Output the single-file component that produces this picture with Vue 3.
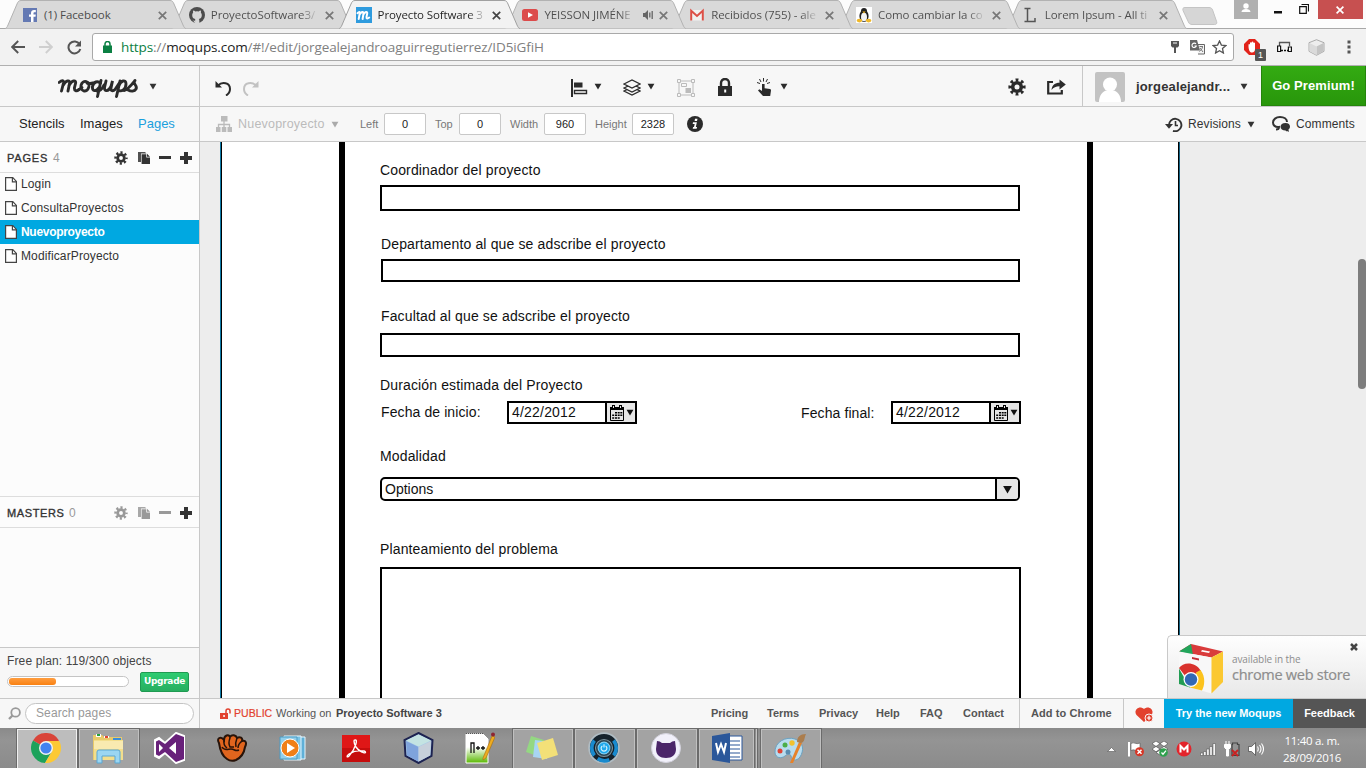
<script setup>
const tabs = [
  { id: 'fb', title: '(1) Facebook' },
  { id: 'gh', title: 'ProyectoSoftware3/' },
  { id: 'mq', title: 'Proyecto Software 3', active: true },
  { id: 'yt', title: 'YEISSON JIMÉNE', audio: true },
  { id: 'gm', title: 'Recibidos (755) - ale' },
  { id: 'tux', title: 'Como cambiar la co' },
  { id: 'li', title: 'Lorem Ipsum - All ti' },
]
const pages = ['Login', 'ConsultaProyectos', 'Nuevoproyecto', 'ModificarProyecto']
const dims = [
  { label: 'Left', value: 0, cls: 'd-left' },
  { label: 'Top', value: 0, cls: 'd-top' },
  { label: 'Width', value: 960, cls: 'd-width' },
  { label: 'Height', value: 2328, cls: 'd-height' },
]
const used = 119
const quota = 300
</script>

<template>
  <div class="screen">
    <svg class="defs" width="0" height="0">
      <symbol id="gear" viewBox="0 0 18 18">
        <circle cx="9" cy="9" r="4.3" fill="none" stroke="currentColor" stroke-width="3.6" />
        <circle cx="9" cy="9" r="7" fill="none" stroke="currentColor" stroke-width="3.2" pathLength="16" stroke-dasharray="1 1" stroke-dashoffset=".5" />
      </symbol>
      <symbol id="copy" viewBox="0 0 12 12">
        <path d="M0 0h7l1.500 1.500H3V10H0z" fill="currentColor" opacity=".85" />
        <path d="M3.600 2.200h4.700v3.400H12V12H3.600z" fill="currentColor" />
        <path d="M9 1.800 12 4.800H9z" fill="currentColor" />
      </symbol>
      <symbol id="caret" viewBox="0 0 8 7"><path d="M.6.8h6.800L4 6.600z" fill="currentColor" /></symbol>
      <symbol id="doc" viewBox="0 0 12 14">
        <path d="M.6.600h7.200l3.600 3.800v9H.6z" fill="#fff" stroke="#444" stroke-width="1.200" />
        <path d="M7.400.8v4h4" fill="none" stroke="#444" stroke-width="1.200" />
      </symbol>
      <symbol id="cal" viewBox="0 0 14 16">
        <path d="M.5 2.500h13v13H.5z" fill="#e6e6e6" stroke="#000" />
        <path d="M0 2h14v3H0zM2 0h3v3H2zM9 0h3v3H9z" /><path d="M3 1h1v2H3zM10 1h1v2h-1z" fill="#e6e6e6" />
        <path d="M5 7h2v1.500H5zM7.700 7h2v1.500h-2zM10.300 7h2v1.500h-2zM2.200 9.500h2V11h-2zM5 9.500h2V11H5zM7.700 9.500h2V11h-2zM10.300 9.500h2V11h-2zM2.200 12.200h2v1.500h-2zM5 12.200h2v1.500H5zM7.700 12.200h2v1.500h-2z" />
      </symbol>
      <symbol id="ball" viewBox="0 0 30 30">
        <path d="M15 15 2 7.500A15 15 0 0 1 28 7.500z" fill="#d9453a" />
        <path d="M15 15 2 7.500A15 15 0 0 0 14 30l7-12z" fill="#1da25b" />
        <path d="M15 8h13.200A15 15 0 0 1 14 30l7.200-12z" fill="#fcc934" />
        <circle cx="15" cy="15" r="7" fill="#f3f3f3" /><circle cx="15" cy="15" r="5.600" fill="#4383f0" />
      </symbol>
    </svg>

    <header class="tabstrip">
      <div v-for="t in tabs" :key="t.id" class="tab" :class="[{ active: t.active }, 't-' + t.id]">
        <svg class="shape" width="181" height="29" viewBox="0 0 181 29">
          <path d="M0 28.500 C1 28.500 2 27.500 3 25 L12 4 C13 1.500 14 .5 16 .5 H165 C167 .5 168 1.500 169 4 L178 25 C179 27.500 180 28.500 181 28.500" />
        </svg>
        <svg class="fav" width="16" height="16" viewBox="0 0 16 16">
          <template v-if="t.id === 'fb'">
            <path d="M1 1h14v14H1z" fill="#6479b3" /><path d="M9 15V9.800H7V7.400h2V6c0-2 1.200-3 3-3h1.800v2.300h-1.200c-.9 0-1.100.4-1.100 1.100v1h2.300l-.3 2.400h-2V15z" fill="#fff" />
          </template>
          <template v-else-if="t.id === 'gh'">
            <circle cx="8" cy="8" r="8" fill="#4d4d4d" /><path d="M6 16v-2.300c-2 .4-2.500-.8-3-1.700M6.200 12C4 11.600 3.200 10.200 3.200 8c0-1 .3-1.700.9-2.300-.2-.7-.1-1.500.1-2.200.9 0 1.600.5 2.100.9a7 7 0 0 1 3.400 0c.5-.4 1.200-.9 2.100-.9.2.7.3 1.500.1 2.200.6.6.9 1.300.9 2.300 0 2.200-.8 3.600-3 4 .3.300.5.800.5 1.500V16H6z" fill="#d9d9d9" />
          </template>
          <template v-else-if="t.id === 'mq'">
            <path d="M0 0h16v16H0z" fill="#2e9bde" /><path d="M1.500 6.200C3 4.500 4 4.500 3.800 6L2.700 12M3.600 7.600C5 4.800 7.800 4 7.500 6.500L6.600 12M7.400 7.600c1.400-2.800 4.200-3.600 3.800-1L10.500 10c-.3 1.600 1 2 2.700.6" fill="none" stroke="#fff" stroke-width="2" stroke-linecap="round" />
          </template>
          <template v-else-if="t.id === 'yt'">
            <rect y="2" width="16" height="12" rx="2.500" fill="#dc4b4b" /><path d="M6 5.200v5.600L11 8z" fill="#fff" />
          </template>
          <template v-else-if="t.id === 'gm'">
            <path d="M1.500 3h13v10.500h-13z" fill="#f1f1f1" /><path d="M2.200 13.500V3.800L8 9l5.800-5.200v9.700" fill="none" stroke="#dc5047" stroke-width="2" />
          </template>
          <template v-else-if="t.id === 'tux'">
            <path d="M0 0h16v16H0z" fill="#fff" /><ellipse cx="8" cy="9" rx="4.600" ry="6" fill="#222" /><circle cx="8" cy="4" r="3" fill="#222" /><ellipse cx="8" cy="10" rx="3" ry="4.300" fill="#f4f4f4" /><path d="M6.300 4.600h3.400L8 6.400z" fill="#eeb320" /><ellipse cx="3.400" cy="13.600" rx="2.800" ry="1.800" fill="#f0b828" /><ellipse cx="12.600" cy="13.600" rx="2.800" ry="1.800" fill="#f0b828" />
          </template>
          <path v-else d="M1.500 1.500h6M1.500 14.500h10.500v-3.500M4.500 1.500v13" fill="none" stroke="#555" stroke-width="1.500" />
        </svg>
        <span class="ttl">{{ t.title }}</span>
        <svg v-if="t.audio" class="audio" width="11" height="10" viewBox="0 0 11 10"><path d="M0 3h2l3-3v10L2 7H0z" fill="#666" /><path d="M6.800 2.500v5M9.200 1v8" stroke="#666" stroke-width="1.300" /></svg>
        <svg class="x" width="9" height="9" viewBox="0 0 9 9"><path d="M.8.800l7.400 7.400M8.200.8.8 8.200" stroke="currentColor" stroke-width="1.700" /></svg>
      </div>
      <svg class="newtab" width="36" height="18" viewBox="0 0 36 18"><path d="M3 .5h24c2 0 3 1 3.600 2.500l4 11.500c.6 2-.2 3-2 3H10c-2 0-3-1-3.600-2.500L1 3.500C.5 1.500 1 .5 3 .5z" fill="#d6d6d6" stroke="#c4c4c4" /></svg>
      <div class="wincontrols">
        <span class="user"><svg width="24" height="19" viewBox="0 0 24 19"><circle cx="12" cy="6" r="2.700" fill="#fff" /><path d="M7.500 12c0-2 2-3 4.500-3s4.500 1 4.500 3z" fill="#fff" /></svg></span>
        <svg class="min" width="8" height="3" viewBox="0 0 8 3"><path d="M0 0h8v2.500H0z" fill="#111" /></svg>
        <svg class="max" width="10" height="10" viewBox="0 0 10 10"><path d="M.7 2.700h6.600v6.600H.7zM2.500.5h7v7" fill="none" stroke="#111" stroke-width="1.200" /></svg>
        <span class="close"><svg width="8" height="8" viewBox="0 0 8 8"><path d="M.6.600l6.800 6.800M7.400.6.6 7.400" stroke="#fff" stroke-width="1.700" /></svg></span>
      </div>
    </header>

    <div class="navbar">
      <svg class="nav back" width="14" height="14" viewBox="0 0 14 14"><path d="M14 7H1.500M7.200 1 1.200 7l6 6" fill="none" stroke="#555" stroke-width="1.900" /></svg>
      <svg class="nav fwd" width="14" height="14" viewBox="0 0 14 14"><path d="M0 7h12.500M6.800 1l6 6-6 6" fill="none" stroke="#cfcfcf" stroke-width="1.900" /></svg>
      <svg class="nav reload" width="15" height="15" viewBox="0 0 15 15"><path d="M12.600 4.200A6 6 0 1 0 13.300 9" fill="none" stroke="#555" stroke-width="2" /><path d="M14 .5V6.500H8z" fill="#555" /></svg>
      <div class="omnibox">
        <svg class="padlock" width="9" height="12" viewBox="0 0 9 12"><path d="M0 4.500h9V12H0z" fill="#0b8043" /><path d="M2 5V3a2.500 2.500 0 0 1 5 0v2" fill="none" stroke="#0b8043" stroke-width="1.500" /></svg>
        <span class="url"><span class="https">https</span>://<b>moqups.com</b>/#!/edit/jorgealejandroaguirregutierrez/ID5iGfiH</span>
        <svg class="keyi" width="8" height="12" viewBox="0 0 8 12"><path d="M0 0h8v5L6.500 6.500H5V12H3V6.500H1.500L0 5z" fill="#555" /><path d="M2 2h4" stroke="#fff" /></svg>
        <svg class="trans" width="15" height="15" viewBox="0 0 15 15"><path d="M6 4.500h8.500v9.500H8" fill="#f5f5f5" stroke="#666" /><path d="M0 0h7l3 10.500H0z" fill="#666" /><path d="M6 4a2.200 2.200 0 1 0 .3 2H4.500" fill="none" stroke="#fff" stroke-width="1.100" /><path d="M9.500 6.500H13M12.500 7c-.5 2.500-2 3.500-3 4.500M10 8l3 4" fill="none" stroke="#777" /></svg>
        <svg class="star" width="15" height="14" viewBox="0 0 15 14"><path d="m7.500 1 1.900 4.100 4.400.5-3.300 3 .9 4.400-3.900-2.200L3.600 13l.9-4.400-3.300-3 4.400-.5z" fill="none" stroke="#555" stroke-width="1.300" /></svg>
      </div>
      <div class="ext adb">
        <svg width="16" height="16" viewBox="0 0 16 16"><path d="M5 0h6l5 5v6l-5 5H5l-5-5V5z" fill="#e2231a" /><path d="M4.500 8V5.500a.9.900 0 0 1 1.500 0V3.800a.9.900 0 0 1 1.700 0V3a.9.900 0 0 1 1.700 0v1a.9.900 0 0 1 1.600 0v6c0 2-1 3.500-3 3.500S5 12 4.500 8z" fill="#fff" /></svg>
        <span class="badge">1</span>
      </div>
      <svg class="ext cast" width="15" height="13" viewBox="0 0 15 13"><path d="M2.500 5V1.500h10V5" fill="none" stroke="#555" stroke-width="1.300" /><path d="M.6 5h3v5.500h-3zM11.400 6h3v4.500h-3z" fill="#fff" stroke="#111" stroke-width="1.200" /><path d="M4 9.500h7" stroke="#111" stroke-width="1.400" stroke-dasharray="2 1" /></svg>
      <svg class="ext cube" width="17" height="17" viewBox="0 0 17 17"><path d="m8.500.7 7.500 3v8.600l-7.500 4-7.500-4V3.700z" fill="#ededed" stroke="#999" stroke-width=".8" /><path d="m8.500 7.500 7-3.500v8.200l-7 3.800z" fill="#c4c4c4" /><path d="M1.500 4 8.500 7.500V16l-7-3.800z" fill="#dadada" /></svg>
      <svg class="ext dots" width="4" height="14" viewBox="0 0 4 14"><path d="M.5.500h3v3h-3zM.5 5.500h3v3h-3zM.5 10.500h3v3h-3z" fill="#555" /></svg>
    </div>

    <div class="brand">
      <svg class="logo" width="81" height="20" viewBox="0 0 81 20">
        <path d="M1 4.500C4 2 6 2 5.500 5L3.500 13M5 7.500C8 2 12.500 1.500 11.500 5.500L10 13M11 7.500C14 2 18.500 1.500 17.500 5.500L16.500 9.500C16 13 18.500 13.500 21 11.500" />
        <ellipse cx="27" cy="8.200" rx="4" ry="4.800" transform="rotate(15 27 8)" /><path d="M21 11.500q2-1 3-2M29 5q3 1 6 0" />
        <path d="M42.500 5.500C40 2.500 35.500 3.500 34.500 8.500 34 13.500 38 14 41 9.500M43 2.500 39.500 18.500M39 13q4 .5 7-6" />
        <path d="M48 3 46.500 9.500C46 14 50.500 13.500 53 8.500L54.500 3 53 10c-.5 3 2 3.500 4 1.500l4-6" />
        <path d="M62 3 58.500 18.500M61 7.500c1.500-5 7-6.500 7-1.500 0 5-4.500 8.500-8 6" />
        <path d="M66 12.500c4-1 7-5 11-10M76.500 3c-2 3 3.500 4.500 1.500 8-1.500 2.500-5 2.500-8 1" />
      </svg>
      <svg class="car" width="8" height="7"><use href="#caret" /></svg>
    </div>

    <div class="actions">
      <svg class="undo" width="17" height="16" viewBox="0 0 17 16"><path d="M3 5.500C7 1.500 15 2.500 15 9c0 3-1.500 5-4 6.500" fill="none" stroke="currentColor" stroke-width="2" /><path d="M.5 1v6.500H7z" fill="currentColor" /></svg>
      <svg class="redo" width="17" height="16" viewBox="0 0 17 16"><path d="M14 5.500C10 1.500 2 2.500 2 9c0 3 1.500 5 4 6.500" fill="none" stroke="currentColor" stroke-width="2" /><path d="M16.500 1v6.500H10z" fill="currentColor" /></svg>
      <svg class="align" width="17" height="18" viewBox="0 0 17 18"><path d="M0 0h2v18H0zM3 3.500h8.500v5H3z" fill="currentColor" /><path d="M3.500 11.500h12v3h-12z" fill="#fff" stroke="currentColor" stroke-width="1.400" /></svg>
      <svg class="car c1" width="8" height="7"><use href="#caret" /></svg>
      <svg class="layers" width="18" height="17" viewBox="0 0 18 17"><g fill="#f7f7f7" stroke="currentColor" stroke-width="1.200"><path d="m1 12 8-3.800L17 12l-8 4z" /><path d="m1 9 8-3.800L17 9l-8 4z" /><path d="m1 5 8-4 8 4-8 4z" /></g></svg>
      <svg class="car c2" width="8" height="7"><use href="#caret" /></svg>
      <svg class="group" width="18" height="18" viewBox="0 0 18 18"><path d="M2 2h14v14H2z" fill="none" stroke="#bbb" /><g fill="#f7f7f7" stroke="#bbb"><path d="M.5.500h3v3h-3zM14.500.500h3v3h-3zM.5 14.500h3v3h-3zM14.500 14.500h3v3h-3zM4.500 4.500h5v3h-5z" /></g><path d="M8.500 9h5.500v5H8.500z" fill="#bbb" /></svg>
      <svg class="lock" width="14" height="18" viewBox="0 0 14 18"><path d="M0 8h14v10H0z" fill="currentColor" /><path d="M3 9V5a4 4 0 0 1 8 0v4" fill="none" stroke="currentColor" stroke-width="2.400" /><path d="M6.200 11.500h2v3h-2z" fill="#fff" /></svg>
      <svg class="hand" width="15" height="18" viewBox="0 0 15 18"><path d="M5 6h2.600v4.200l5.400.8c.8.200 1 .8 1 1.500L13.200 18H6l-5-5.500 1.300-1.200L5 13z" fill="currentColor" /><path d="M6.500 0v3.500M2.500 1 4 4M10.500 1 9 4M0 4.500l3 1M13 4.500l-3 1" stroke="currentColor" /></svg>
      <svg class="car c3" width="8" height="7"><use href="#caret" /></svg>
      <svg class="cog" width="18" height="18"><use href="#gear" /></svg>
      <svg class="share" width="19" height="16" viewBox="0 0 19 16"><path d="M6 3H1.200v11.500h13.600V11" fill="none" stroke="currentColor" stroke-width="2.200" /><path d="M4.500 11C5 6 8 3.700 12.500 3.700V.5L18.800 5.500l-6.300 5V7.300C9 7.300 6.500 8.500 4.500 11z" fill="currentColor" /></svg>
      <div class="account">
        <svg width="30" height="30" viewBox="0 0 30 30"><rect width="30" height="30" rx="2" fill="#c3c3c3" /><circle cx="15" cy="12.500" r="7" fill="#fff" /><path d="M4 30c0-7 4-10.500 7-11.500h8c3 1 7 4.500 7 11.500z" fill="#fff" /></svg>
        <b>jorgealejandr...</b>
        <svg class="car" width="8" height="7"><use href="#caret" /></svg>
      </div>
      <div class="premium">Go Premium!</div>
    </div>

    <nav class="libs"><span class="l1">Stencils</span><span class="l2">Images</span><span class="l3">Pages</span></nav>

    <div class="props">
      <svg class="tree" width="16" height="16" viewBox="0 0 16 16"><path d="M5 0h6.500v5.500H5zM0 11h4.500v5H0zM5.800 11h4.500v5H5.800zM11.500 11H16v5h-4.500z" fill="#bbb" /><path d="M8 5v6M2.500 11V8.500h11V11" fill="none" stroke="#bbb" stroke-width="1.300" /></svg>
      <span class="pname">Nuevoproyecto</span>
      <svg class="car" width="8" height="7"><use href="#caret" /></svg>
      <label v-for="d in dims" :key="d.label" :class="d.cls"><span>{{ d.label }}</span><i>{{ d.value }}</i></label>
      <svg class="info" width="16" height="16" viewBox="0 0 16 16"><circle cx="8" cy="8" r="8" fill="#2b2b2b" /><path d="M8 2.800h2.500L10 5H7.600zM6 6.300h3.900L8.800 11h1.300l-.5 1.700H5.700L6.100 11H7l.7-3H5.700z" fill="#fff" /></svg>
      <div class="rev">
        <svg width="18" height="15" viewBox="0 0 18 15"><path d="M4 8a6.200 6.200 0 1 1 4 5.800" fill="none" stroke="currentColor" stroke-width="1.900" /><path d="M0 7h8L4 11.800z" fill="currentColor" /><path d="M10.500 4v4.500H13" fill="none" stroke="currentColor" stroke-width="1.600" /></svg>
        <span>Revisions</span><svg class="car" width="8" height="7"><use href="#caret" /></svg>
      </div>
      <div class="com">
        <svg width="19" height="16" viewBox="0 0 19 16"><path d="M4 13.500c2.200 0 3-.8 3-2.500C3 11.500 1 9 1 6.500 1 3.500 4 1 8 1s7 2 7 5" fill="none" stroke="currentColor" stroke-width="2" /><path d="M13.500 7c-3 0-5 1.600-5 3.800s2 3.700 5 3.700c.7.800 2 1.200 3.500 1.200l-.6-2.200c1-.7 1.600-1.600 1.600-2.700C18 8.600 16.500 7 13.500 7z" fill="currentColor" /></svg>
        <span>Comments</span>
      </div>
    </div>

    <aside class="side">
      <div class="panel pages">
        <div class="phead">
          <b>PAGES</b><em>4</em>
          <svg class="pg" width="14" height="14"><use href="#gear" /></svg>
          <svg class="pc" width="12" height="12"><use href="#copy" /></svg>
          <svg class="pm" width="12" height="3" viewBox="0 0 12 3"><path d="M0 0h12v3H0z" fill="currentColor" /></svg>
          <svg class="pp" width="12" height="12" viewBox="0 0 12 12"><path d="M4 0h4v4h4v4H8v4H4V8H0V4h4z" fill="#333" /></svg>
        </div>
        <ul>
          <li v-for="p in pages" :key="p" :class="{ sel: p === 'Nuevoproyecto' }"><svg width="12" height="14"><use href="#doc" /></svg>{{ p }}</li>
        </ul>
      </div>
      <div class="panel masters">
        <div class="phead off">
          <b>MASTERS</b><em>0</em>
          <svg class="pg" width="14" height="14"><use href="#gear" /></svg>
          <svg class="pc" width="12" height="12"><use href="#copy" /></svg>
          <svg class="pm" width="12" height="3" viewBox="0 0 12 3"><path d="M0 0h12v3H0z" fill="currentColor" /></svg>
          <svg class="pp" width="12" height="12" viewBox="0 0 12 12"><path d="M4 0h4v4h4v4H8v4H4V8H0V4h4z" fill="#333" /></svg>
        </div>
      </div>
      <div class="plan">
        <p>Free plan: {{ used }}/{{ quota }} objects</p>
        <div class="prow"><div class="track"><div class="fill" :style="{ width: (used / quota * 100) + '%' }"></div></div><span class="upgrade">Upgrade</span></div>
      </div>
    </aside>

    <main class="work">
      <div class="sheet">
        <div class="frame">
          <p class="lb a">Coordinador del proyecto</p><div class="box b1"></div>
          <p class="lb b">Departamento al que se adscribe el proyecto</p><div class="box b2"></div>
          <p class="lb c">Facultad al que se adscribe el proyecto</p><div class="box b3"></div>
          <p class="lb d">Duración estimada del Proyecto</p>
          <div class="dates">
            <span class="s1">Fecha de inicio:</span>
            <div class="date"><span>4/22/2012</span><i><svg width="14" height="16"><use href="#cal" /></svg><svg class="car" width="8" height="7"><use href="#caret" /></svg></i></div>
            <span class="s2">Fecha final:</span>
            <div class="date"><span>4/22/2012</span><i><svg width="14" height="16"><use href="#cal" /></svg><svg class="car" width="8" height="7"><use href="#caret" /></svg></i></div>
          </div>
          <p class="lb e">Modalidad</p>
          <div class="select"><span>Options</span><i><svg width="11" height="9"><use href="#caret" /></svg></i></div>
          <p class="lb f">Planteamiento del problema</p><div class="area"></div>
        </div>
      </div>
      <div class="scroll"></div>
      <div class="store">
        <svg class="bag" width="46" height="52" viewBox="0 0 46 52">
          <path d="M1 8.500 13 1l32 7.500-11.500 6z" fill="#d93b3b" /><path d="M1 8.500 13 1l2 11z" fill="#22a55b" />
          <path d="m1 8.500 32.500 6V50.500L1 41z" fill="#f8f8f8" /><path d="m33.500 14.500 11.500-6V39L33.500 50.500z" fill="#fbc831" />
          <path d="m14 14 7 1.500v2L14 16z" fill="#c42d35" /><path d="m24 7 8 1.500-1 1.500-8-1.500z" fill="#fff" />
          <path d="M1 25C5 19 17 18 23 28l-4 3-7-1-4 4z" fill="#d9322d" /><path d="M1 25.500 7 36l6 7.500-1 1L1 41z" fill="#229c53" /><path d="M18 29.500 22.500 27C28 34 26.500 43 24 47.500L12 44.500l7-7z" fill="#fcc31e" />
          <circle cx="13" cy="36.500" r="7.500" fill="#fff" /><circle cx="13" cy="36.500" r="6.200" fill="#3268b4" />
        </svg>
        <div class="stext"><span>available in the</span><strong>chrome web store</strong></div>
        <svg class="sx" width="8" height="8" viewBox="0 0 8 8"><path d="M1 1l6 6M7 1 1 7" stroke="#444" stroke-width="2.500" /></svg>
      </div>
    </main>

    <div class="search">
      <svg width="13" height="13" viewBox="0 0 13 13"><circle cx="7.600" cy="5.400" r="4.300" fill="none" stroke="#999" stroke-width="1.800" /><path d="M4.500 8.500 1 12" stroke="#999" stroke-width="2.300" /></svg>
      <div class="sbox">Search pages</div>
    </div>

    <footer class="foot">
      <svg class="ulock" width="11" height="11" viewBox="0 0 11 11"><path d="M0 5h8v6H0z" fill="#e2412e" /><path d="M6 5V3a2 2 0 0 1 4 0v2.500" fill="none" stroke="#e2412e" stroke-width="1.500" /><path d="M3.300 7h1.500v2H3.300z" fill="#fff" /></svg>
      <span class="public">PUBLIC</span><span class="working">Working on</span><b class="proj">Proyecto Software 3</b>
      <b class="f1">Pricing</b><b class="f2">Terms</b><b class="f3">Privacy</b><b class="f4">Help</b><b class="f5">FAQ</b><b class="f6">Contact</b>
      <b class="add">Add to Chrome</b>
      <span class="heart"><svg width="19" height="16" viewBox="0 0 19 16"><path d="M9 15 1.500 8C-2 3.500 4-2.500 9 2c5-4.500 11 1.500 7.500 6z" fill="#e2412e" /><circle cx="14" cy="11" r="4" fill="#e2412e" stroke="#f7f7f7" /><path d="M14 8.800v4.400M11.800 11h4.400" stroke="#fff" stroke-width="1.200" /></svg></span>
      <b class="try">Try the new Moqups</b><b class="fdb">Feedback</b>
    </footer>

    <div class="taskbar">
      <div class="slot on hot"><svg width="30" height="30"><use href="#ball" /></svg></div>
      <div class="slot on"><svg width="32" height="32" viewBox="0 0 32 32"><path d="M1 3h9l2 2h18v23H1z" fill="#e9ca6a" /><path d="M4 2h5v3H4zM12 4h5v2h-5z" fill="#fff" /><path d="M5 2h3v2H5z" fill="#27a03c" /><path d="M13 4h3v2h-3z" fill="#e04934" /><path d="M21 6h8v2h-8z" fill="#3b8ed8" /><path d="M2 8h29v20H2z" fill="#f3de8c" /><path d="M2 9h29v8H2z" fill="#f9eab0" /><path d="M5 31V20q0-2 2-2h19q2 0 2 2v11h-5v-7H10v7z" fill="#9bd6f2" stroke="#5ba7d3" /></svg></div>
      <div class="slot"><svg width="32" height="32" viewBox="0 0 32 32"><path d="M22 1 30 4v24l-8 3L11 21l-6 5-4-2V8l4-2 6 5z" fill="#fff" stroke="#fff" stroke-width="2" /><path d="M22 2 30 5v22l-8 3L11 20l-6 4-3-1.500v-13L5 8l6 4z" fill="#68217a" /><path d="m22 10-7 6 7 6zM5 12v8l4-4z" fill="#fff" /></svg></div>
      <div class="slot"><svg width="30" height="28" viewBox="0 0 30 28"><path d="M2 9C-1 4 4 2 7 6 7 1 12 0 13 3c2-3 6-2 7 1 3-2 6 0 5 3 4-1 5 2 3 6-1 7-5 11-9 13q-5 2-9-1C5 22 3 16 2 9z" fill="#e0651e" stroke="#271309" stroke-width="2" /><path d="M7 6q-1 5 3 8M13 4q-2 5 0 9h4M20 4q-2 5-1 9M25 7q-4 3-4 7M5 13c2 4 6 2 9 2 4 0 4 3 8 1" fill="none" stroke="#271309" stroke-width="1.500" /></svg></div>
      <div class="slot"><svg width="30" height="26" viewBox="0 0 30 26"><path d="M10 2h16v22H10z" fill="#5fb0d8" stroke="#e7f6fd" /><path d="M5 1h17v24H5z" fill="#7bc4e6" stroke="#e7f6fd" /><path d="M1 2h17v22H1z" fill="#92cfeb" stroke="#4b9bc4" /><circle cx="11" cy="13" r="9" fill="#f07f18" stroke="#fff" /><path d="m8 8 8 5-8 5z" fill="#fff" /></svg></div>
      <div class="slot"><svg width="28" height="27" viewBox="0 0 28 27"><path d="M0 0h28v27H0z" fill="#c60d0d" /><path d="M0 0h28v13H0z" fill="#df1717" /><path d="M13 5c3-1 1 8-6 16-2 2-3 0 0-2 5-3 10-4 15-3 3 1 1 3-2 1-5-2-8-7-8-11 0-1 0-1 1-1z" fill="none" stroke="#fff" stroke-width="1.400" /></svg></div>
      <div class="slot"><svg width="31" height="32" viewBox="0 0 31 32"><path d="m15.500 1 14 7-1 16-13 7-13-7-1-16z" fill="#a8c8e8" stroke="#1d2351" stroke-width="2" /><path d="m15.500 2.500 12.500 6-12.500 6-12.500-6z" fill="#c4e3e2" /><path d="m3 9 12.500 6v14.500L4 23.500z" fill="#7fa3dc" /><path d="m28 9-12.500 6v14.500L27 23.500z" fill="#c7d0db" /></svg></div>
      <div class="slot"><svg width="30" height="32" viewBox="0 0 30 32"><defs><linearGradient id="npp" x2="0" y2="1"><stop offset=".45" stop-color="#fff" /><stop offset="1" stop-color="#58b800" /></linearGradient></defs><path d="M1 2h17l5 5v24H1z" fill="url(#npp)" stroke="#fff" /><path d="M1 1.500h18" stroke="#555" stroke-dasharray="1 1" /><path d="M6 21V11h3v10M11 16h4M13 14v4M16 16h4M18 14v4" fill="none" stroke="#111" stroke-width="1.300" /><path d="m18 26 9-22 3 1-9 21-3 2z" fill="#edac21" stroke="#a76c0c" stroke-width=".6" /><circle cx="28" cy="2.500" r="2" fill="#8e2431" /></svg></div>
      <div class="slot on"><svg width="32" height="26" viewBox="0 0 32 26"><path d="m5 1 13 4-4 17-14-5z" fill="#94d882" /><path d="m9 5 15 2-3 17-14-2z" fill="#a8d5f3" /><path d="m11 8 16-5 5 17-16 5z" fill="#f3e078" /></svg></div>
      <div class="slot on"><svg width="32" height="32" viewBox="0 0 30 30"><circle cx="15" cy="15" r="14" fill="#15222c" stroke="#b0bcc3" stroke-width="1.600" /><path d="M6 8a11 11 0 0 0 0 14M24 22a11 11 0 0 0 0-14M9 25a12 12 0 0 0 11 1" fill="none" stroke="#198ace" stroke-width="3.500" /><circle cx="15" cy="15" r="8" fill="#2c4552" stroke="#7c929c" /><circle cx="15" cy="15" r="5.500" fill="#1da7ed" stroke="#7fd0f5" /><path d="M13.500 13a2.700 2.700 0 1 0 3 0M15 11.500v3" fill="none" stroke="#d2f4ff" stroke-width="1.100" /></svg></div>
      <div class="slot on"><svg width="30" height="30" viewBox="0 0 30 30"><circle cx="15" cy="15" r="14.500" fill="#f1f0fa" stroke="#d2d1dc" /><path d="M6 8q3 0 5 2h8q2-2 5-2l1 8c0 6-4 9-10 9S5 22 5 16z" fill="#4a2569" /></svg></div>
      <div class="slot on stack"><svg width="32" height="30" viewBox="0 0 32 30"><path d="M15 3h15v24H15z" fill="#fff" stroke="#2b579a" /><path d="M18 8h10M18 12h10M18 16h10M18 20h10M18 24h10" stroke="#2b579a" stroke-width="1.200" /><path d="M0 3 18 0v30L0 27z" fill="#2b579a" /><path d="m4 10 2 9 3-8 3 8 2-9" fill="none" stroke="#fff" stroke-width="2" /></svg></div>
      <div class="slot on"><svg width="32" height="31" viewBox="0 0 32 31"><path d="M1 20C0 9 12 3 21 6c9 3 9 12 5 18-4 5-8 3-9-1-1-3-4-2-6 0-4 3-9 2-10-3z" fill="#b8dcee" stroke="#6ba2c2" /><circle cx="6" cy="18" r="2.500" fill="#df4436" /><circle cx="11" cy="12" r="2.500" fill="#4cae48" /><circle cx="18" cy="10" r="2.700" fill="#f2c12e" /><circle cx="14" cy="19" r="2.500" fill="#5a8caf" /><path d="m16 30 9-21 3 1-9 20z" fill="#e6822a" /><path d="M23 9c0-5 3-8 9-8-2 4-1 8-5 9z" fill="#ab7d4d" /></svg></div>
      <div class="tray">
        <svg class="up" width="9" height="5" viewBox="0 0 9 5"><path d="M4.500.5 8.500 4.500h-8z" fill="#fff" stroke="#555" stroke-width=".6" /></svg>
        <svg class="flag" width="17" height="16" viewBox="0 0 17 16"><path d="M1 1v14.500" stroke="#fff" stroke-width="2" /><path d="M3 2.500c3-2 5 1.500 9-.5v7C8 11 6 7.500 3 9.500z" fill="#fff" stroke="#555" stroke-width=".6" /><circle cx="11.500" cy="10.800" r="4.500" fill="#d63626" /><path d="m9.500 8.800 4 4M13.500 8.800l-4 4" stroke="#fff" stroke-width="1.500" /></svg>
        <svg class="drop" width="16" height="16" viewBox="0 0 16 16"><path d="m4 0 4 2.700L4 5.400 0 2.700zM12 0l4 2.700-4 2.700-4-2.700zM4 5.400l4 2.700-4 2.700L0 8.100zM12 5.400l4 2.700-4 2.700-4-2.700zM8 9l4 2.500L8 14l-4-2.500z" fill="#fff" stroke="#444" stroke-width=".6" /><circle cx="11.500" cy="11.500" r="4.300" fill="#2fa14d" /><path d="m9.500 11.500 1.500 1.700 3-3.500" fill="none" stroke="#fff" stroke-width="1.300" /></svg>
        <svg class="mega" width="16" height="16" viewBox="0 0 16 16"><circle cx="8" cy="8" r="7.500" fill="#e3242b" /><path d="M4.500 11.500V5L8 8.500 11.500 5v6.500" fill="none" stroke="#fff" stroke-width="2" /></svg>
        <svg class="net" width="16" height="13" viewBox="0 0 16 13"><path d="M.5 10h2.400v2.500H.5zM3.600 8.500H6v4H3.600zM6.700 6h2.400v6.500H6.700zM9.800 3.500h2.400v9H9.800zM13 .5h2.400v12H13z" fill="#fff" stroke="#555" stroke-width=".6" /></svg>
        <svg class="bat" width="16" height="16" viewBox="0 0 16 16"><path d="M2 0v3M5 0v3M.5 3.500h6v3l-2 2V15h-2V8.500l-2-2z" fill="#fff" stroke="#fff" /><path d="M8.500 3.500V2h5v1.500H15v11H8v-11z" fill="none" stroke="#444" stroke-width="1.200" /><path d="m8 9 6 6M14 9l-6 6" stroke="#c92121" stroke-width="1.800" /></svg>
        <svg class="vol" width="16" height="14" viewBox="0 0 16 14"><path d="M.5 4.500h3L7.500.700v12.600l-4-3.800h-3z" fill="#fff" stroke="#444" stroke-width=".7" /><path d="M9.500 4.500q1.500 2.500 0 5M11.500 3q3 4 0 8M13.500 1.500q4 5.500 0 11" fill="none" stroke="#fff" stroke-width="1.100" /></svg>
        <div class="clock"><span>11:40 a. m.</span><span>28/09/2016</span></div>
      </div>
    </div>
  </div>
</template>

<style>
html, body { margin: 0; overflow: hidden; }
</style>

<style scoped>
* { box-sizing: border-box; }
.screen {
  width: 1366px; height: 768px; display: grid; overflow: hidden;
  grid-template-columns: 200px 1166px;
  grid-template-rows: 29px 37px 41px 35px 556px 30px 40px;
  font-family: "Liberation Sans", Arial, sans-serif; font-size: 12px; color: #333; background: #f7f7f7;
}
.defs { position: absolute; }
svg { display: block; flex: none; }
p, ul { margin: 0; padding: 0; list-style: none; }
i, em { font-style: normal; }

.tabstrip { grid-column: 1 / 3; display: flex; padding-left: 5px; background: #fcfcfc; border-bottom: 1px solid #a8a8a8; font-family: "Open Sans", "Noto Sans", sans-serif; isolation: isolate; }
.tab { position: relative; width: 166.800px; height: 29px; display: flex; align-items: center; padding-left: 17px; flex: none; color: #4c4c4c; }
.tab:nth-child(1) { z-index: 6; } .tab:nth-child(2) { z-index: 5; } .tab:nth-child(4) { z-index: 4; }
.tab:nth-child(5) { z-index: 3; } .tab:nth-child(6) { z-index: 2; } .tab:nth-child(7) { z-index: 1; }
.shape { position: absolute; left: 0; top: 0; z-index: -1; }
.shape path { fill: #d9d9d9; stroke: #b2b2b2; }
.tab.active { z-index: 9; color: #222; }
.tab.active .shape path { fill: #f2f2f2; stroke: #a0a0a0; }
.fav { margin-top: 1px; }
.ttl { width: 107px; margin-left: 6px; font-size: 11.500px; white-space: nowrap; letter-spacing: -.08px; }
.t-gh .ttl, .t-mq .ttl, .t-yt .ttl, .t-gm .ttl, .t-tux .ttl, .t-li .ttl { background: linear-gradient(90deg, #4c4c4c 84%, #ccc 99%); background-clip: text; color: transparent; }
.t-mq .ttl { background-image: linear-gradient(90deg, #222 84%, #ccc 99%); background-clip: text; letter-spacing: -.12px; }
.t-yt .ttl { width: 90px; }
.audio { margin: 1px 0 0 9px; }
.x { margin-left: 7px; margin-top: 1px; color: #777; }
.t-yt .x { margin-left: 5px; }
.active .x { color: #444; }
.newtab { margin: 7px 0 0 9px; }
.wincontrols { display: flex; margin-left: 16.400px; height: 19px; }
.user { width: 24px; background: #b0b0b0; }
.min { margin: 11px 0 0 16px; }
.max { margin: 4px 0 0 17px; }
.close { width: 45px; margin-left: 9px; background: #c75050; display: flex; align-items: center; justify-content: center; }

.navbar { grid-column: 1 / 3; display: flex; align-items: center; background: #f2f2f2; border-bottom: 1px solid #b0b0b0; }
.back { margin-left: 11px; } .fwd { margin-left: 14px; } .reload { margin-left: 14px; }
.omnibox { display: flex; align-items: center; width: 1142px; height: 28px; margin-left: 10px; background: #fff; border: 1px solid #a9a9a9; border-radius: 3px; font-family: "Open Sans", "Noto Sans", sans-serif; }
.padlock { margin-left: 10px; }
.url { width: 1050px; margin-left: 9px; font-size: 13.500px; letter-spacing: -.11px; color: #808080; white-space: nowrap; }
.url b { font-weight: 400; color: #222; } .https { color: #0b8043; }
.trans { margin-left: 11px; } .star { margin-left: 7px; }
.adb { position: relative; margin-left: 10px; }
.badge { position: absolute; left: 11px; top: 10px; width: 11px; height: 12px; background: #555; color: #fff; font-size: 9px; line-height: 12px; text-align: center; border-radius: 1px; }
.cast { margin-left: 17px; } .cube { margin-left: 16px; } .dots { margin-left: 22px; }

.brand { display: flex; align-items: center; border-right: 1px solid #c8c8c8; border-bottom: 1px solid #c8c8c8; }
.logo { margin-left: 58px; margin-top: 4px; fill: none; stroke: #2b2b2b; stroke-width: 2.900; stroke-linecap: round; }
.brand .car { margin-left: 10px; }
.actions { display: flex; align-items: center; border-bottom: 1px solid #c8c8c8; color: #2b2b2b; }
.undo { margin-left: 15px; margin-top: 3px; } .redo { margin: 3px 0 0 10px; color: #c2c2c2; }
.align { margin-left: 312px; margin-top: 3px; } .c1 { margin-left: 6px; } .layers { margin-left: 21px; margin-top: 3px; } .c2 { margin-left: 6px; }
.group { margin: 3px 0 0 22px; } .lock { margin: 2px 0 0 23px; } .hand { margin: 1px 0 0 25px; } .c3 { margin-left: 8px; }
.cog { margin: 2px 0 0 220px; } .share { margin: 2px 0 0 21px; }
.account { width: 179px; height: 40px; margin-left: 16px; border-left: 1px solid #c8c8c8; display: flex; align-items: center; padding-left: 12px; font-size: 13px; color: #333; }
.account svg:first-child { margin-top: 2px; }
.account b { width: 98px; margin-left: 11px; white-space: nowrap; letter-spacing: .15px; } .account .car { margin-left: 6px; }
.premium { width: 105px; height: 40px; align-self: flex-start; background: linear-gradient(#34ab12, #28960b); border: 1px solid #24850b; border-top: 0; color: #fff; font-weight: 700; font-size: 13px; line-height: 39px; text-align: center; white-space: nowrap; letter-spacing: .1px; }

.libs { display: flex; align-items: center; padding-bottom: 2px; border-right: 1px solid #c8c8c8; border-bottom: 1px solid #c8c8c8; font-size: 13px; color: #222; }
.l1 { width: 61px; margin-left: 19px; } .l2 { width: 58px; } .l3 { color: #1a9fdd; }
.props { display: flex; align-items: center; border-bottom: 1px solid #c8c8c8; }
.tree { margin-left: 16px; } .pname { width: 88px; margin-left: 6px; color: #bbb; font-size: 12.500px; letter-spacing: .2px; white-space: nowrap; } .props > .car { margin-left: 5px; color: #aaa; }
.props label { display: flex; align-items: center; justify-content: space-between; font-size: 11px; color: #777; }
.props label i { width: 42px; height: 22px; border: 1px solid #c8c8c8; border-radius: 2px; background: #fff; color: #222; text-align: center; line-height: 20px; }
.d-left { width: 66px; margin-left: 21px; } .d-top { width: 66px; margin-left: 9px; } .d-width { width: 76px; margin-left: 9px; } .d-height { width: 79px; margin-left: 9px; }
.info { margin-left: 13px; }
.rev { display: flex; align-items: center; margin-left: 462px; } .rev span { width: 54px; margin-left: 5px; letter-spacing: .1px; } .rev .car { margin-left: 5px; }
.com { display: flex; align-items: center; margin-left: 17px; } .com span { margin-left: 5px; letter-spacing: .1px; }

.side { display: flex; flex-direction: column; border-right: 1px solid #c8c8c8; background: #fcfcfc; }
.phead { display: flex; align-items: center; height: 31px; padding-top: 1px; border-bottom: 1px solid #ddd; color: #333; }
.phead b { margin-left: 7px; font-size: 11px; letter-spacing: .8px; font-weight: 400; color: #333; -webkit-text-stroke: .35px #333; }
.phead em { margin-left: 8px; color: #999; }
.pages b { width: 38px; } .masters b { width: 54px; letter-spacing: .6px; }
.pg { margin-left: auto; } .pc { margin-left: 10px; } .pm { margin-left: 9px; } .pp { margin: 0 7px 0 9px; }
.off .pg, .off .pc, .off .pm { color: #999; }
.pages { height: 354px; }
.pages ul { margin-top: -1px; }
li { display: flex; align-items: center; height: 24px; padding-left: 5px; color: #333; letter-spacing: .12px; }
li svg { margin-right: 4px; }
.sel { background: #00a8e1; color: #fff; font-weight: 700; letter-spacing: -.3px; }
.masters { height: 151px; border-top: 1px solid #ddd; }
.plan { flex: 1; border-top: 1px solid #c8c8c8; background: #f7f7f7; color: #444; padding: 6px 0 0 7px; }
.plan p { line-height: 15px; letter-spacing: .13px; }
.prow { display: flex; align-items: center; margin-top: 3px; }
.track { width: 122px; height: 11px; padding: 1px; border: 1px solid #c4c4c4; border-radius: 6px; background: #fff; margin-top: -1px; }
.fill { height: 7px; border-radius: 3px; background: linear-gradient(#ff9d3f, #f98112); }
.upgrade { width: 49px; height: 20px; margin-left: 11px; border: 1px solid #1f9a51; border-radius: 2px; background: linear-gradient(#2ecc71, #27ae60); color: #fff; font: 700 9px/17px "DejaVu Sans", sans-serif; letter-spacing: -.3px; text-align: center; white-space: nowrap; }

.work { position: relative; background: #ededed; overflow: hidden; padding-left: 20px; }
.sheet { width: 960px; height: 556px; padding-left: 118px; background: #fff; border-left: 1px solid #0b78a4; border-right: 1px solid #146283; box-shadow: inset 1px 0 #000, inset -1px 0 #000; }
.frame { width: 754px; height: 556px; border: solid #000; border-width: 0 6px; display: flex; flex-direction: column; align-items: flex-start; padding-left: 35px; font-size: 14px; color: #111; overflow: hidden; }
.frame > * { flex: none; }
.lb { line-height: 16px; letter-spacing: .14px; white-space: nowrap; }
.box { border: 2px solid #000; }
.a { margin-top: 20px; } .b1 { width: 640px; height: 26px; margin-top: 7px; }
.b { margin: 25px 0 0 1px; } .b2 { width: 639px; height: 23px; margin: 7px 0 0 1px; }
.c { margin: 26px 0 0 1px; } .b3 { width: 640px; height: 24px; margin-top: 9px; }
.d { margin-top: 20px; }
.dates { display: flex; align-items: center; height: 23px; margin: 8px 0 0 1px; }
.s1 { width: 126px; margin-top: -2px; letter-spacing: .1px; } .s2 { width: 90px; margin-left: 164px; letter-spacing: .1px; }
.date { width: 130px; height: 23px; border: 2px solid #000; display: flex; justify-content: space-between; }
.date span { padding-left: 3px; line-height: 18px; letter-spacing: .2px; }
.date i { width: 30px; background: #e6e6e6; border-left: 2px solid #000; display: flex; align-items: center; padding-left: 3px; }
.date .car { margin-left: 2px; }
.e { margin-top: 24px; }
.select { width: 640px; height: 24px; margin-top: 13px; border: 2px solid #000; border-radius: 5px; display: flex; justify-content: space-between; overflow: hidden; }
.select span { padding-left: 3px; line-height: 20px; }
.select i { width: 23px; border-left: 2px solid #000; background: #e6e6e6; display: flex; align-items: center; justify-content: center; }
.f { margin-top: 40px; }
.area { width: 641px; height: 160px; margin-top: 10px; border: 2px solid #000; }
.scroll { position: absolute; left: 1158px; top: 117px; width: 8px; height: 130px; border-radius: 4px; background: #7d7d7d; }
.store { position: absolute; right: 0; bottom: 0; width: 199px; height: 63px; border: 1px solid #c9c9c9; border-right: 0; border-bottom: 0; border-radius: 5px 0 0 0; background: linear-gradient(#fefefe, #e8e8e8); display: flex; padding: 7px 0 0 11px; }
.bag { margin-left: -1px; }
.stext { display: flex; flex-direction: column; width: 121px; margin: 8px 0 0 8px; font-family: "Open Sans", sans-serif; color: #8d8d8d; white-space: nowrap; }
.stext span { font-size: 10px; line-height: 16px; letter-spacing: -.1px; } .stext strong { font-weight: 400; font-size: 14.500px; line-height: 15px; letter-spacing: -.28px; -webkit-text-stroke: .2px; }
.sx { margin: 0 0 0 -3px; }

.search { display: flex; align-items: center; border-top: 1px solid #c8c8c8; border-right: 1px solid #c8c8c8; padding-left: 8px; }
.sbox { width: 169px; height: 21px; margin-left: 4px; padding-left: 10px; border: 1px solid #c4c4c4; border-radius: 11px; background: #fff; color: #999; line-height: 19px; letter-spacing: .1px; }
.foot { display: flex; align-items: center; border-top: 1px solid #c8c8c8; font-size: 11px; line-height: 29px; color: #555; white-space: nowrap; }
.ulock { margin-left: 20px; margin-top: -1px; }
.public { width: 42px; margin-left: 3px; color: #e2412e; font-size: 10.500px; letter-spacing: .05px; -webkit-text-stroke: .2px; } .working { width: 60px; } .proj { width: 375px; color: #444; }
.f1 { width: 56px; } .f2 { width: 52px; } .f3 { width: 57px; } .f4 { width: 44px; } .f5 { width: 43px; } .f6 { width: 56px; }
.add { width: 104px; height: 29px; border-left: 1px solid #c8c8c8; padding-left: 11px; letter-spacing: .1px; }
.heart { width: 41px; height: 29px; border-left: 1px solid #c8c8c8; padding: 8px 0 0 11px; }
.try { width: 129px; height: 29px; background: #00a8e1; color: #fff; text-align: center; }
.fdb { width: 73px; height: 29px; background: #555; color: #fff; text-align: center; }

.taskbar { grid-column: 1 / 3; display: flex; align-items: center; padding-left: 14px; background: linear-gradient(#8a8a8a, #949494 30%, #8b8b8b); }
.slot { width: 62px; height: 40px; display: flex; align-items: center; justify-content: center; position: relative; flex: none; padding-left: 2px; }
.slot svg { position: relative; }
.on::before { content: ""; position: absolute; left: 2px; top: 0; width: 60px; height: 40px; border: 1px solid #6b6b6b; box-shadow: inset 0 0 0 1px #c0c0c0; background: #a3a3a3; }
.hot::before { background: #bdbdbd; box-shadow: inset 0 0 0 1px #f0f0f0; }
.stack::before { width: 55px; }
.stack::after { content: ""; position: absolute; left: 56px; top: 0; width: 5px; height: 40px; border: 1px solid #6b6b6b; border-left: 0; box-shadow: inset -1px 0 #c4c4c4; }
.tray { display: flex; align-items: center; margin-left: 287px; padding-top: 2px; }
.flag { margin-left: 12px; } .drop { margin-left: 7px; } .mega { margin-left: 8px; } .net { margin-left: 8px; } .bat { margin-left: 8px; } .vol { margin-left: 8px; }
.clock { width: 80px; margin: 0 0 0 8px; display: flex; flex-direction: column; align-items: center; color: #fff; font: 11.500px/17px "Open Sans", sans-serif; letter-spacing: -.3px; }
</style>
